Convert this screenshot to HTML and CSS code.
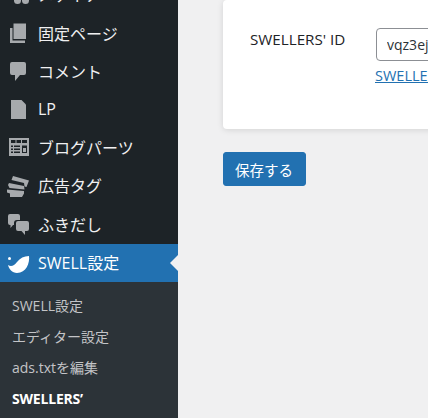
FILE: index.html
```html
<!DOCTYPE html>
<html lang="ja">
<head>
  <meta charset="UTF-8" />
  <title>SWELLERS' ID</title>
  <link rel="stylesheet" href="styles.css">
</head>
<body>
  <nav class="sidebar">
    <ul class="menu">
      <li class="menu-item">
        <svg class="icon" viewBox="0 0 24 24"><circle cx="11.500" cy="17.500" r="3.500"/><circle cx="19.500" cy="17.500" r="3.500"/><path d="M8 3h15v11H8z"/></svg>
        <span class="menu-text">メディア</span>
      </li>
      <li class="menu-item">
        <svg class="icon" viewBox="0 0 24 24"><path d="M7.500 1.500h12.500v15.500H7.500z"/><path d="M4 6h2.500v12.500H19V21H4z"/></svg>
        <span class="menu-text">固定ページ</span>
      </li>
      <li class="menu-item">
        <svg class="icon" viewBox="0 0 24 24"><path d="M6 2h12a2 2 0 0 1 2 2v9a2 2 0 0 1-2 2h-4l-5 6v-6H6a2 2 0 0 1-2-2V4a2 2 0 0 1 2-2z"/></svg>
        <span class="menu-text">コメント</span>
      </li>
      <li class="menu-item">
        <svg class="icon" viewBox="0 0 24 24"><path d="M5 2h10.500L20 6.500V21H5z"/></svg>
        <span class="menu-text">LP</span>
      </li>
      <li class="menu-item">
        <svg class="icon" viewBox="0 0 24 24"><path fill-rule="evenodd" d="M3 2h20v18H3zM5 4v3h4.500V4zM10.500 4v3h4.500V4zM16 4v3h5V4zM5 9.500v1.500h2V9.500zM8 9.500v1.500h6V9.500zM5 12.500v1.500h2v-1.500zM8 12.500v1.500h6v-1.500zM5 15.500V17h2v-1.500zM8 15.500V17h6v-1.500zM16 9.500V17h5V9.500z"/><path d="M17 12h3v4h-3z"/></svg>
        <span class="menu-text">ブログパーツ</span>
      </li>
      <li class="menu-item">
        <svg class="icon" viewBox="0 0 24 24"><path d="M7 2l16 4.500-2.500 6.500-2-.6-.5-3.400L5.500 6z"/><path d="M3 9l15 3 .5 3.500L3.500 14 2 11z"/><path d="M1 15.500l17 1.500v2.500L16 23H4v-3.500l-3-1z"/></svg>
        <span class="menu-text">広告タグ</span>
      </li>
      <li class="menu-item">
        <svg class="icon" viewBox="0 0 24 24"><path d="M4 1h8a2 2 0 0 1 2 2v4h-3a3 3 0 0 0-3 3v2H7l-2.500 3v-3H4a2 2 0 0 1-2-2V3a2 2 0 0 1 2-2z"/><path d="M12 8h9a2 2 0 0 1 2 2v6a2 2 0 0 1-2 2h-2v4l-3.500-4H12a2 2 0 0 1-2-2v-6a2 2 0 0 1 2-2z"/></svg>
        <span class="menu-text">ふきだし</span>
      </li>
      <li class="menu-item active">
        <svg class="icon" viewBox="0 0 24 24"><path d="M2 14c3 2 6 1 9-3 3-4 7-6 12-6 1 7-3 17-12 17-5 0-8-4-9-8z"/><circle cx="3.500" cy="7.500" r="1.500"/></svg>
        <span class="menu-text">SWELL設定</span>
      </li>
    </ul>
    <ul class="submenu">
      <li>SWELL設定</li>
      <li>エディター設定</li>
      <li>ads.txtを編集</li>
      <li class="current">SWELLERS’</li>
    </ul>
  </nav>

  <main class="content">
    <section class="card">
      <div class="field-label">SWELLERS' ID</div>
      <div class="field">
        <input class="text-input" type="text" value="vqz3ej" />
        <a class="field-link" href="#">SWELLERS' IDを確認する</a>
      </div>
    </section>
    <button class="save-btn">保存する</button>
  </main>
</body>
</html>
```

FILE: styles.css
```css
html, body {
  margin: 0;
  padding: 0;
  height: 418px;
  overflow: hidden;
}

body {
  display: flex;
  background: #f0f0f1;
  color: #3c434a;
  font-family: "Open Sans", "Noto Sans CJK JP", sans-serif;
}

ul {
  list-style: none;
  margin: 0;
  padding: 0;
}

/* sidebar */
.sidebar {
  flex: 0 0 178px;
  width: 178px;
  height: 418px;
  overflow: hidden;
  background: #1d2327;
}

.menu {
  margin-top: -23.7px;
}

.menu-item {
  display: flex;
  align-items: center;
  height: 38.2px;
  color: #f0f0f1;
  font-size: 16px;
  position: relative;
}

.menu-text {
  padding-bottom: 2px;
}

.icon {
  flex: none;
  width: 24px;
  height: 24px;
  margin: 0 8px 0 6px;
  fill: #a7aaad;
}

.menu-item.active {
  background: #2271b1;
  color: #fff;
}

.menu-item.active .icon {
  fill: #fff;
}

.menu-item.active::after {
  content: "";
  position: absolute;
  right: 0;
  top: 50%;
  margin-top: -8px;
  border: 8px solid transparent;
  border-right-color: #f0f0f1;
}

.submenu {
  background: #2c3338;
  padding-top: 9px;
  height: 136px;
  font-size: 14px;
  color: #c3c4c7;
}

.submenu li {
  height: 31px;
  line-height: 30px;
  padding-left: 12px;
}

.submenu .current {
  color: #fff;
  font-weight: 700;
  letter-spacing: -0.2px;
}

/* main area */
.content {
  flex: 1;
  min-width: 0;
  padding-left: 45px;
}

.card {
  display: flex;
  width: 500px;
  height: 129px;
  background: #fff;
  border-radius: 4px;
  box-shadow: 0 1px 6px rgba(0, 0, 0, 0.12);
  box-sizing: border-box;
  padding: 28px 0 0 27px;
}

.field-label {
  width: 126px;
  font-size: 15.2px;
  font-weight: 500;
  color: #1d2327;
  line-height: 22px;
}

.field {
  display: flex;
  flex-direction: column;
  align-items: flex-start;
}

.text-input {
  width: 300px;
  height: 33px;
  box-sizing: border-box;
  border: 1px solid #8c8f94;
  border-radius: 4px;
  padding: 0 10px;
  font: 14px "Open Sans", sans-serif;
  color: #2c3338;
  background: #fff;
}

.field-link {
  margin: 5px 0 0 -1px;
  font-size: 14.5px;
  line-height: 20px;
  color: #2271b1;
  white-space: nowrap;
}

.save-btn {
  display: block;
  margin-top: 23px;
  width: 83px;
  height: 34px;
  padding: 0 1px 0 0;
  border: 1px solid #2271b1;
  border-radius: 3px;
  background: #2271b1;
  color: #fff;
  font: 14.500px "Noto Sans CJK JP", sans-serif;
}
```
